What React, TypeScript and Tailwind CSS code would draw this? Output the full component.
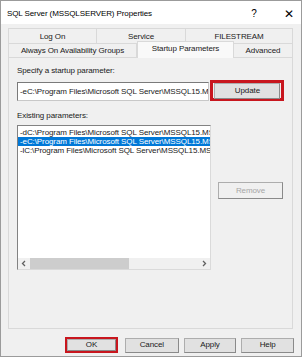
import React from 'react';

const font = { fontFamily: '"Liberation Sans", Arial, sans-serif' };

const params = [
  '-dC:\\Program Files\\Microsoft SQL Server\\MSSQL15.MSSQLSERVER\\MSSQL\\DATA\\master.mdf',
  '-eC:\\Program Files\\Microsoft SQL Server\\MSSQL15.MSSQLSERVER\\MSSQL\\Log\\ERRORLOG',
  '-lC:\\Program Files\\Microsoft SQL Server\\MSSQL15.MSSQLSERVER\\MSSQL\\DATA\\mastlog.ldf',
];

function WinButton({ label, disabled }: { label: string; disabled?: boolean }) {
  return (
    <div
      className={`flex h-full w-full items-center justify-center border border-[#adadad] border-r-[#8a8a8a] border-b-[#8a8a8a] ${
        disabled ? 'bg-[#f0f0f0] text-[#a6a6a6]' : 'bg-[#e1e1e1] text-[#1a1a1a]'
      }`}
    >
      {label}
    </div>
  );
}

export default function App() {
  return (
    <div
      style={font}
      className="flex h-[357px] w-[302px] flex-col overflow-hidden border border-[#9b9b9b] bg-[#f0f0f0] text-[8px] leading-none tracking-[-0.1px] text-[#1a1a1a]"
    >
      {/* Title bar */}
      <div className="flex h-[23px] shrink-0 items-center bg-white pl-[6px] pt-[2px] text-[8px] text-black">
        <span className="flex-1">SQL Server (MSSQLSERVER) Properties</span>
        <span className="w-[14px] text-center text-[10px]">?</span>
        <span className="ml-[21px] mr-[5px] w-[14px] text-center text-[12px] font-light">✕</span>
      </div>

      <div className="flex flex-1 flex-col px-[7px] pt-[4px]">
        {/* Tabs back row */}
        <div className="flex h-[15px]">
          {[
            ['Log On', 'w-[89px]'],
            ['Service', 'w-[89px]'],
            ['FILESTREAM', 'w-[107px]'],
          ].map(([t, w], i) => (
            <div
              key={t}
              className={`${w} flex items-center justify-center border border-b-0 border-[#d9d9d9] bg-[#f0f0f0] pt-[1px] ${
                i > 0 ? 'border-l-0' : ''
              }`}
            >
              {t}
            </div>
          ))}
        </div>
        {/* Tabs front row */}
        <div className="flex h-[14px] items-start">
          <div className="flex h-[14px] w-[129px] items-center justify-center border border-b-0 border-[#d9d9d9] bg-[#f0f0f0]">
            Always On Availability Groups
          </div>
          <div className="z-10 -mt-[2px] flex h-[17px] w-[97px] items-start justify-center border border-b-0 border-[#d9d9d9] bg-[#f9f9f9] pt-[3px]">
            Startup Parameters
          </div>
          <div className="flex h-[14px] w-[59px] items-center justify-center border border-b-0 border-l-0 border-[#d9d9d9] bg-[#f0f0f0] pt-[1px]">
            Advanced
          </div>
        </div>

        {/* Panel */}
        <div className="flex h-[272px] w-[285px] flex-col border border-[#d9d9d9] bg-[#f0f0f0] px-[8px] pt-[9px]">
          <div>Specify a startup parameter:</div>
          <div className="mt-[5px] flex items-end">
            <div className="flex h-[19px] w-[194px] items-center overflow-hidden whitespace-nowrap border border-[#7a7a7a] border-b-[#c8c8c8] border-r-[#c8c8c8] bg-white pl-[2px]">
              -eC:\Program Files\Microsoft SQL Server\MSSQL15.MSSQLSERVER\MSSQL\Log\ERRORLOG
            </div>
            <div className="ml-[1px] flex h-[21px] w-[75px] items-center justify-center border-[3px] border-[#c8161e]">
              <div className="ml-[1px] h-[16px] w-[66px]">
                <WinButton label="Update" />
              </div>
            </div>
          </div>

          <div className="mt-[11px]">Existing parameters:</div>
          <div className="mt-[5px] flex">
            <div className="flex h-[145px] w-[194px] flex-col border border-[#828282] border-b-[#dadada] border-r-[#dadada] bg-white">
              <div className="flex flex-1 flex-col pt-[2px]">
                {params.map((p, i) => (
                  <div
                    key={p}
                    className={`h-[9px] overflow-hidden whitespace-nowrap pl-[2px] leading-[9px] ${
                      i === 1 ? 'bg-[#0078d7] text-white' : ''
                    }`}
                  >
                    {p}
                  </div>
                ))}
              </div>
              {/* Horizontal scrollbar */}
              <div className="flex h-[11px] items-center bg-[#f0f0f0]">
                <svg width="12" height="11" viewBox="0 0 12 11">
                  <path d="M7 3 L4.5 5.5 L7 8" fill="none" stroke="#606060" strokeWidth="1.3" />
                </svg>
                <div className="h-[11px] w-[99px] bg-[#cdcdcd]" />
                <div className="flex-1" />
                <svg width="12" height="11" viewBox="0 0 12 11">
                  <path d="M5 3 L7.5 5.5 L5 8" fill="none" stroke="#606060" strokeWidth="1.3" />
                </svg>
              </div>
            </div>
            <div className="ml-[7px] mt-[57px] h-[17px] w-[65px]">
              <WinButton label="Remove" disabled />
            </div>
          </div>
        </div>

        {/* Bottom buttons */}
        <div className="mt-[8px] flex h-[16px] items-center">
          <div className="ml-[57px] flex h-[16px] w-[53px] items-center justify-center border-[2px] border-[#c8161e]">
            <div className="h-[12px] w-[49px]">
              <WinButton label="OK" />
            </div>
          </div>
          <div className="ml-[7px] h-[15px] w-[54px]">
            <WinButton label="Cancel" />
          </div>
          <div className="ml-[5px] h-[15px] w-[53px]">
            <WinButton label="Apply" />
          </div>
          <div className="ml-[5px] h-[15px] w-[53px]">
            <WinButton label="Help" />
          </div>
        </div>
      </div>
    </div>
  );
}
